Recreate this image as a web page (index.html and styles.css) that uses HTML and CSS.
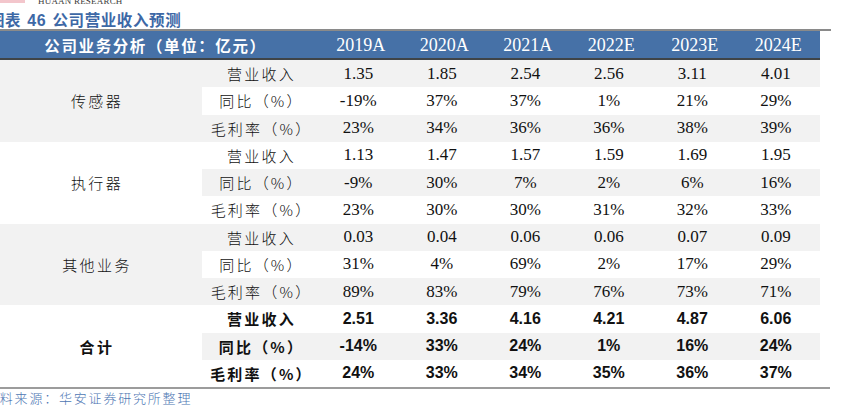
FILE: index.html
```html
<!DOCTYPE html>
<html lang="zh-CN">
<head>
<meta charset="utf-8">
<title>图表46 公司营业收入预测</title>
<link rel="stylesheet" href="styles.css">
</head>
<body>
<div class="page">
  <div class="brand">
    <span class="brand-mark"></span>
    <span class="brand-name">HUAAN RESEARCH</span>
  </div>
  <div class="title">图表 <span class="title-num">46</span> 公司营业收入预测</div>
  <div class="rule-top"></div>
  <div class="tbl">
    <div class="h h-title">公司业务分析（单位：亿元）</div>
    <div class="h">2019A</div>
    <div class="h">2020A</div>
    <div class="h">2021A</div>
    <div class="h">2022E</div>
    <div class="h">2023E</div>
    <div class="h">2024E</div>

    <div class="grp g">传感器</div>
    <div class="lbl g">营业收入</div><div class="num g">1.35</div><div class="num g">1.85</div><div class="num g">2.54</div><div class="num g">2.56</div><div class="num g">3.11</div><div class="num g">4.01</div>
    <div class="lbl">同比（%）</div><div class="num">-19%</div><div class="num">37%</div><div class="num">37%</div><div class="num">1%</div><div class="num">21%</div><div class="num">29%</div>
    <div class="lbl g">毛利率（%）</div><div class="num g">23%</div><div class="num g">34%</div><div class="num g">36%</div><div class="num g">36%</div><div class="num g">38%</div><div class="num g">39%</div>

    <div class="grp">执行器</div>
    <div class="lbl">营业收入</div><div class="num">1.13</div><div class="num">1.47</div><div class="num">1.57</div><div class="num">1.59</div><div class="num">1.69</div><div class="num">1.95</div>
    <div class="lbl g">同比（%）</div><div class="num g">-9%</div><div class="num g">30%</div><div class="num g">7%</div><div class="num g">2%</div><div class="num g">6%</div><div class="num g">16%</div>
    <div class="lbl">毛利率（%）</div><div class="num">23%</div><div class="num">30%</div><div class="num">30%</div><div class="num">31%</div><div class="num">32%</div><div class="num">33%</div>

    <div class="grp g">其他业务</div>
    <div class="lbl g">营业收入</div><div class="num g">0.03</div><div class="num g">0.04</div><div class="num g">0.06</div><div class="num g">0.06</div><div class="num g">0.07</div><div class="num g">0.09</div>
    <div class="lbl">同比（%）</div><div class="num">31%</div><div class="num">4%</div><div class="num">69%</div><div class="num">2%</div><div class="num">17%</div><div class="num">29%</div>
    <div class="lbl g">毛利率（%）</div><div class="num g">89%</div><div class="num g">83%</div><div class="num g">79%</div><div class="num g">76%</div><div class="num g">73%</div><div class="num g">71%</div>

    <div class="grp b">合计</div>
    <div class="lbl b">营业收入</div><div class="num b">2.51</div><div class="num b">3.36</div><div class="num b">4.16</div><div class="num b">4.21</div><div class="num b">4.87</div><div class="num b">6.06</div>
    <div class="lbl b g">同比（%）</div><div class="num b g">-14%</div><div class="num b g">33%</div><div class="num b g">24%</div><div class="num b g">1%</div><div class="num b g">16%</div><div class="num b g">24%</div>
    <div class="lbl b">毛利率（%）</div><div class="num b">24%</div><div class="num b">33%</div><div class="num b">34%</div><div class="num b">35%</div><div class="num b">36%</div><div class="num b">37%</div>
  </div>
  <div class="rule-bottom"></div>
  <div class="source">资料来源：华安证券研究所整理</div>
</div>
</body>
</html>
```

FILE: styles.css
```css
html, body {
  margin: 0;
  padding: 0;
  background: #ffffff;
  overflow: hidden;
}

.page {
  margin-left: -8px;
  width: 850px;
  font-family: "Noto Sans CJK SC", "Liberation Serif", serif;
  color: #111111;
}

.brand {
  height: 5px;
  display: flex;
  align-items: flex-end;
  overflow: hidden;
}

.brand-mark {
  width: 33px;
  height: 3px;
  margin-bottom: 2px;
  background: #f3c6cc;
  align-self: flex-start;
}

.brand-name {
  margin-left: 13px;
  font-family: "Liberation Serif", serif;
  font-size: 9px;
  line-height: 9px;
  margin-bottom: -1px;
  color: #3b3b3b;
  letter-spacing: 0.2px;
}

.title {
  margin-top: 4px;
  margin-left: -3px;
  height: 20px;
  font-size: 15.5px;
  line-height: 20px;
  font-weight: 700;
  color: #3d68a6;
  letter-spacing: 0.6px;
  word-spacing: 2px;
}

.title-num {
  font-family: "Liberation Sans", sans-serif;
  font-weight: 700;
  font-size: 16px;
}

.rule-top {
  width: 839px;
  height: 2px;
  background: #8a8a8a;
}

.tbl {
  display: grid;
  width: 828px;
  grid-template-columns: 210px 117px repeat(6, 83.5px);
  grid-template-rows: 29px repeat(12, 27.25px);
}

.h {
  background: #4671a7;
  border-bottom: 2px solid #3f4448;
  color: #ffffff;
  font-family: "Liberation Serif", serif;
  font-size: 18px;
  display: flex;
  align-items: center;
  justify-content: center;
  padding-top: 1px;
}

.h-title {
  grid-column: span 2;
  font-family: "Noto Sans CJK SC", sans-serif;
  font-size: 15.5px;
  font-weight: 700;
  letter-spacing: 1.6px;
}

.grp, .lbl, .num {
  display: flex;
  align-items: center;
  justify-content: center;
  background: #ffffff;
}

.g {
  background: #f2f2f2;
}

.grp {
  grid-row: span 3;
  font-size: 15px;
  letter-spacing: 2.4px;
  font-weight: 300;
}

.lbl {
  font-size: 15px;
  letter-spacing: 2.2px;
  font-weight: 300;
  padding-left: 2px;
}

.num {
  font-family: "Liberation Serif", serif;
  font-size: 17px;
  padding-right: 5px;
}

.grp.b, .lbl.b {
  font-weight: 700;
}

.num.b {
  font-family: "Liberation Sans", sans-serif;
  font-weight: 700;
  font-size: 16px;
}

.rule-bottom {
  width: 838px;
  height: 2px;
  background: #9c9c9c;
}

.source {
  margin-top: 1px;
  margin-left: -7px;
  font-size: 13px;
  line-height: 16px;
  letter-spacing: 1.8px;
  color: #4d76b3;
  font-weight: 300;
}
```
